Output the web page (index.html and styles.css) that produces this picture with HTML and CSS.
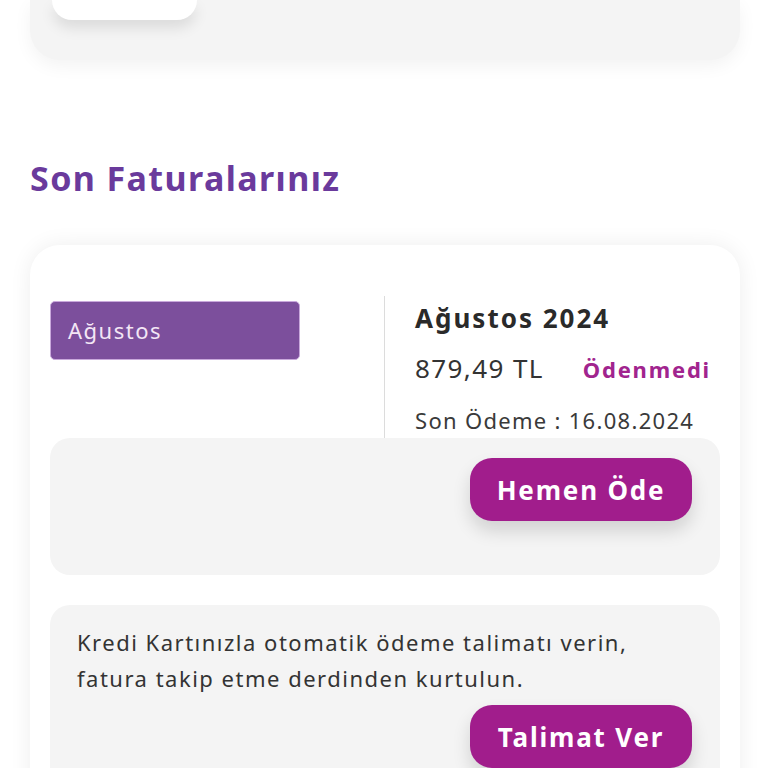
FILE: index.html
```html
<!DOCTYPE html>
<html lang="tr">
<head>
<meta charset="utf-8">
<title>Son Faturalarınız</title>
<link rel="stylesheet" href="styles.css">
</head>
<body>
<div class="top-card">
  <div class="top-tile"></div>
</div>

<h2 class="section-title">Son Faturalarınız</h2>

<div class="bill-card">
  <div class="bill-row">
    <div class="bill-left">
      <div class="month-select">Ağustos</div>
    </div>
    <div class="bill-right">
      <div class="bill-title">Ağustos 2024</div>
      <div class="bill-amount-row">
        <span class="bill-amount">879,49 TL</span>
        <span class="bill-status">Ödenmedi</span>
      </div>
      <div class="bill-due">Son Ödeme : 16.08.2024</div>
    </div>
  </div>
  <div class="pay-box">
    <button class="pill-btn">Hemen Öde</button>
  </div>
  <div class="order-box">
    <p class="order-text">Kredi Kartınızla otomatik ödeme talimatı verin,<br>fatura takip etme derdinden kurtulun.</p>
    <div class="order-actions">
      <button class="pill-btn">Talimat Ver</button>
    </div>
  </div>
</div>
</body>
</html>
```

FILE: styles.css
```css
* { box-sizing: border-box; }
html, body { margin: 0; padding: 0; background: #ffffff; }
body {
  font-family: "Noto Sans", "Open Sans", sans-serif;
  color: #333333;
  height: 768px;
  overflow: hidden;
}

.top-card {
  margin: 0 28px 0 30px;
  height: 60px;
  background: #f4f4f4;
  border-radius: 0 0 30px 30px;
  box-shadow: 0 6px 18px rgba(0,0,0,0.05);
  padding-left: 22px;
}
.top-tile {
  width: 145px;
  height: 20px;
  background: #ffffff;
  border-radius: 0 0 20px 20px;
  box-shadow: 0 8px 14px rgba(0,0,0,0.10);
}

.section-title {
  margin: 96px 0 0 30px;
  height: 89px;
  font-family: "Noto Sans", sans-serif;
  font-weight: 700;
  font-size: 34px;
  letter-spacing: 1.4px;
  line-height: 44px;
  color: #6a3a9c;
}

.bill-card {
  margin: 0 28px 0 30px;
  background: #ffffff;
  border-radius: 30px;
  box-shadow: 0 0 22px rgba(0,0,0,0.07);
  padding: 51px 20px 40px 20px;
}

.bill-row {
  display: flex;
}
.bill-left {
  width: 335px;
  padding-top: 5px;
  border-right: 1px solid #dcdcdc;
}
.month-select {
  width: 250px;
  height: 59px;
  background: #7c4f9c;
  border: 1px solid #c9a9dc;
  border-radius: 5px;
  color: #f3e6f5;
  font-size: 22px;
  letter-spacing: 1.5px;
  line-height: 57px;
  padding-left: 17px;
}
.bill-right {
  flex: 1;
  padding-left: 30px;
  height: 142px;
}
.bill-title {
  font-weight: 700;
  font-size: 26px;
  letter-spacing: 2px;
  line-height: 30px;
  margin-top: 7px;
  color: #2a2a2a;
}
.bill-amount-row {
  display: flex;
  justify-content: space-between;
  align-items: baseline;
  margin-top: 20px;
  padding-right: 9px;
}
.bill-amount {
  font-size: 26px;
  letter-spacing: 1.4px;
  line-height: 30px;
  color: #333333;
}
.bill-status {
  font-weight: 700;
  font-size: 22px;
  letter-spacing: 1.8px;
  color: #a1248e;
}
.bill-due {
  font-size: 22px;
  letter-spacing: 1.3px;
  line-height: 28px;
  margin-top: 22px;
  color: #3a3a3a;
}

.pay-box {
  background: #f4f4f4;
  border-radius: 20px;
  height: 137px;
  padding: 20px 28px 0 0;
  display: flex;
  justify-content: flex-end;
  align-items: flex-start;
}
.pill-btn {
  width: 222px;
  height: 63px;
  border: none;
  border-radius: 22px;
  background: #a11d8c;
  color: #ffffff;
  font-family: "Noto Sans", sans-serif;
  font-weight: 700;
  font-size: 26px;
  letter-spacing: 1.8px;
  box-shadow: 0 10px 18px rgba(0,0,0,0.14);
  padding: 0;
}

.order-box {
  margin-top: 30px;
  background: #f4f4f4;
  border-radius: 20px;
  padding: 19px 28px 20px 27px;
}
.order-text {
  margin: 0;
  font-size: 22px;
  letter-spacing: 1.5px;
  line-height: 36px;
  color: #333333;
}
.order-actions {
  display: flex;
  justify-content: flex-end;
  margin-top: 9px;
}
```
